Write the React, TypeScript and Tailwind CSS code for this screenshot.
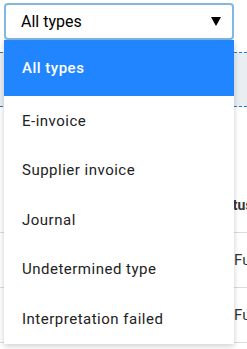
import React from 'react';

const OPTIONS = [
  'All types',
  'E-invoice',
  'Supplier invoice',
  'Journal',
  'Undetermined type',
  'Interpretation failed',
];

export default function App() {
  const selected = 0;

  return (
    <div className="relative h-[349px] w-[247px] overflow-hidden bg-white font-['Roboto',sans-serif] text-[#222]">
      {/* select box */}
      <div className="px-[4px] pt-[3px]">
        <div className="flex h-[37px] w-[230px] items-center justify-between rounded-[4px] border-2 border-[#80b8e2] bg-white pl-[15px] pr-[10px]">
          <span className="text-[16px] text-black">All types</span>
          <svg width="10" height="9" viewBox="0 0 10 9" className="mr-[1px]">
            <path d="M0 0h10L5 9z" fill="#000" />
          </svg>
        </div>
      </div>

      {/* page content behind the open menu */}
      <div className="mt-[12px] h-[55px] border-y border-dashed border-[#2a7cbf] bg-[#e8eef2]" />
      <div className="h-[85px]" />
      <div className="h-[41px] border-b border-[#dcdcdc] pl-[212px] pt-[3px] text-[14px] font-bold text-[#333]">
        Status
      </div>
      <div className="flex h-[55px] items-center border-b border-[#dcdcdc] pl-[234px] text-[15px] text-[#333]">
        Full
      </div>
      <div className="flex h-[55px] items-center border-b border-[#dcdcdc] pl-[234px] text-[15px] text-[#333]">
        Full
      </div>

      {/* open dropdown */}
      <ul className="absolute left-[4px] top-[40px] w-[230px] bg-white shadow-[0_2px_6px_rgba(0,0,0,0.2)]">
        {OPTIONS.map((opt, i) => (
          <li
            key={opt}
            className={
              i === selected
                ? 'flex h-[56px] items-center bg-[#2185ff] pl-[18px] text-[15px] font-medium tracking-[0.5px] text-white'
                : 'flex h-[49.5px] items-center pl-[18px] text-[15px] tracking-[0.5px] text-[#222]'
            }
          >
            {opt}
          </li>
        ))}
      </ul>
    </div>
  );
}
